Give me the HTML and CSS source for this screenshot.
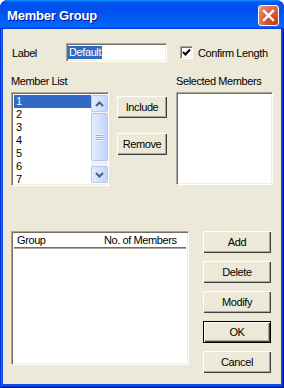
FILE: index.html
```html
<!DOCTYPE html>
<html lang="en">
<head>
    <meta charset="UTF-8">
    <title>Member Group</title>
    <link rel="stylesheet" href="styles.css">
</head>
<body>

    <div class="window">
        <!-- Title bar -->
        <div class="titlebar">
            <span class="title">Member Group</span>
            <button class="close-btn" aria-label="Close">
                <svg width="13" height="13" viewBox="0 0 13 13">
                    <path d="M2 2 L11 11 M11 2 L2 11" stroke="#fff" stroke-width="2.4" stroke-linecap="square"/>
                </svg>
            </button>
        </div>

        <div class="client">
            <!-- Label row -->
            <div class="top-row">
                <span class="field-label">Label</span>
                <div class="textbox sunken"><span class="selected-text">Default</span></div>
                <div class="checkbox sunken">
                    <svg width="9" height="9" viewBox="0 0 9 9">
                        <polyline points="1,4 3.5,6.5 8,1.5" fill="none" stroke="#000" stroke-width="2"/>
                    </svg>
                </div>
                <span class="check-label">Confirm Length</span>
            </div>

            <!-- Member lists -->
            <div class="member-row">
                <div class="col-list">
                    <div class="group-label">Member List</div>
                    <div class="listbox sunken">
                        <div class="items">
                            <div class="item active">1</div>
                            <div class="item">2</div>
                            <div class="item">3</div>
                            <div class="item">4</div>
                            <div class="item">5</div>
                            <div class="item">6</div>
                            <div class="item">7</div>
                        </div>
                        <div class="scrollbar">
                            <div class="sb-btn">
                                <svg width="9" height="6" viewBox="0 0 9 6"><polyline points="1,5 4.5,1.5 8,5" fill="none" stroke="#4d6185" stroke-width="2"/></svg>
                            </div>
                            <div class="sb-thumb">
                                <div class="grip"></div>
                            </div>
                            <div class="sb-track"></div>
                            <div class="sb-btn">
                                <svg width="9" height="6" viewBox="0 0 9 6"><polyline points="1,1 4.5,4.5 8,1" fill="none" stroke="#4d6185" stroke-width="2"/></svg>
                            </div>
                        </div>
                    </div>
                </div>

                <div class="col-buttons">
                    <button class="btn">Include</button>
                    <button class="btn">Remove</button>
                </div>

                <div class="col-selected">
                    <div class="group-label">Selected Members</div>
                    <div class="selected-box sunken"></div>
                </div>
            </div>

            <!-- Groups -->
            <div class="group-row">
                <div class="listview sunken">
                    <div class="lv-header">
                        <span class="lv-col-group">Group</span>
                        <span>No. of Members</span>
                    </div>
                </div>
                <div class="side-buttons">
                    <button class="btn">Add</button>
                    <button class="btn">Delete</button>
                    <button class="btn">Modify</button>
                    <button class="btn default">OK</button>
                    <button class="btn">Cancel</button>
                </div>
            </div>
        </div>
    </div>

</body>
</html>
```

FILE: styles.css
```css
body {
    margin: 0;
    background-color: #ffffff;
    font-family: "Liberation Sans", Arial, sans-serif;
    font-size: 11px;
    letter-spacing: -0.4px;
    color: #000;
}

/* Window frame */
.window {
    width: 284px;
    height: 388px;
    display: flex;
    flex-direction: column;
    background-color: #0b4fe2;
    border-radius: 8px 8px 0 0;
    box-shadow: inset 1px 0 #0831d9, inset -1px -1px #00138c, inset 2px 0 #166aee, inset -2px -2px #003bda;
    overflow: hidden;
}
.titlebar {
    height: 29px;
    flex-shrink: 0;
    display: flex;
    align-items: center;
    justify-content: space-between;
    padding: 1px 5px 0 7px;
    box-sizing: border-box;
    background: linear-gradient(180deg, #0997ff, #0053ee 8%, #0050ee 40%, #0066ff 88%, #0066ff 93%, #005bff 95%, #003dd7 96%, #003dd7);
    border-radius: 8px 8px 0 0;
}
.title {
    color: #ffffff;
    font-weight: bold;
    font-size: 13px;
    letter-spacing: -0.2px;
    text-shadow: 1px 1px #0f1089;
}
.close-btn {
    width: 21px;
    height: 21px;
    padding: 0;
    display: flex;
    align-items: center;
    justify-content: center;
    border: 1px solid #ffffff;
    border-radius: 3px;
    background: radial-gradient(circle at 85% 85%, #c33b0e 0%, #dd5b32 45%, #e6805f 80%, #f2b39c 100%);
}

/* Client area */
.client {
    flex: 1;
    margin: 0 3px 4px;
    padding: 14px 8px 0;
    background-color: #ece9d8;
}

.sunken {
    box-sizing: border-box;
    background-color: #ffffff;
    border: 1px solid;
    border-color: #aca899 #ffffff #ffffff #aca899;
    box-shadow: inset 1px 1px #716f64, inset -1px -1px #f1efe2;
    padding: 1px;
}

.top-row {
    display: flex;
    align-items: center;
    height: 19px;
}
.field-label {
    width: 54px;
    padding-left: 1px;
}
.textbox {
    width: 101px;
    height: 19px;
    padding: 2px 1px;
}
.selected-text {
    display: inline-block;
    background-color: #316ac5;
    color: #ffffff;
    line-height: 13px;
    padding: 0 1px;
}
.checkbox {
    width: 13px;
    height: 13px;
    margin-left: 13px;
    display: flex;
    align-items: center;
    justify-content: center;
}
.check-label {
    margin-left: 5px;
}

/* Member lists */
.member-row {
    display: flex;
    margin-top: 12px;
}
.group-label {
    height: 18px;
    padding-top: 1px;
    line-height: 13px;
    box-sizing: border-box;
}
.col-list {
    width: 98px;
}
.listbox {
    height: 94px;
    display: flex;
    padding: 2px 0 1px 2px;
    overflow: hidden;
}
.items {
    flex: 1;
    overflow: hidden;
}
.item {
    height: 13px;
    line-height: 13px;
    padding-left: 2px;
}
.item.active {
    background-color: #316ac5;
    color: #ffffff;
}
.scrollbar {
    width: 17px;
    display: flex;
    flex-direction: column;
    margin-bottom: 1px;
    background-color: #f3f1e8;
}
.sb-btn, .sb-thumb {
    box-sizing: border-box;
    border: 1px solid #b4c8f6;
    border-radius: 2px;
    background: linear-gradient(90deg, #e4ecfd, #c3d4fb);
    display: flex;
    align-items: center;
    justify-content: center;
}
.sb-btn {
    height: 17px;
}
.sb-thumb {
    height: 48px;
    margin-top: 1px;
}
.sb-track {
    flex: 1;
}
.grip {
    width: 7px;
    height: 7px;
    background: repeating-linear-gradient(180deg, #eef4fe 0, #eef4fe 1px, #8cb0f8 1px, #8cb0f8 2px);
}

.col-buttons {
    width: 50px;
    margin-left: 8px;
    padding-top: 22px;
    display: flex;
    flex-direction: column;
    gap: 15px;
}
.col-selected {
    width: 97px;
    margin-left: 9px;
}
.selected-box {
    height: 93px;
}

/* Buttons */
.btn {
    height: 22px;
    padding: 0;
    font-family: inherit;
    font-size: 11px;
    letter-spacing: -0.4px;
    color: #000;
    background-color: #ece9d8;
    border: none;
    box-shadow: inset 1px 1px #ffffff, inset -1px -1px #404040, inset -2px -2px #aca899;
}
.btn.default {
    border: 1px solid #000000;
}

/* Groups list */
.group-row {
    display: flex;
    margin-top: 45px;
}
.listview {
    width: 178px;
    height: 134px;
    padding: 2px;
}
.lv-header {
    display: flex;
    height: 14px;
    line-height: 12px;
    padding-left: 3px;
    border-bottom: 1px solid #716f64;
    box-shadow: 0 1px #aca899;
    box-sizing: border-box;
}
.lv-col-group {
    width: 87px;
}
.side-buttons {
    width: 68px;
    margin-left: 14px;
    display: flex;
    flex-direction: column;
    gap: 8px;
}
```
